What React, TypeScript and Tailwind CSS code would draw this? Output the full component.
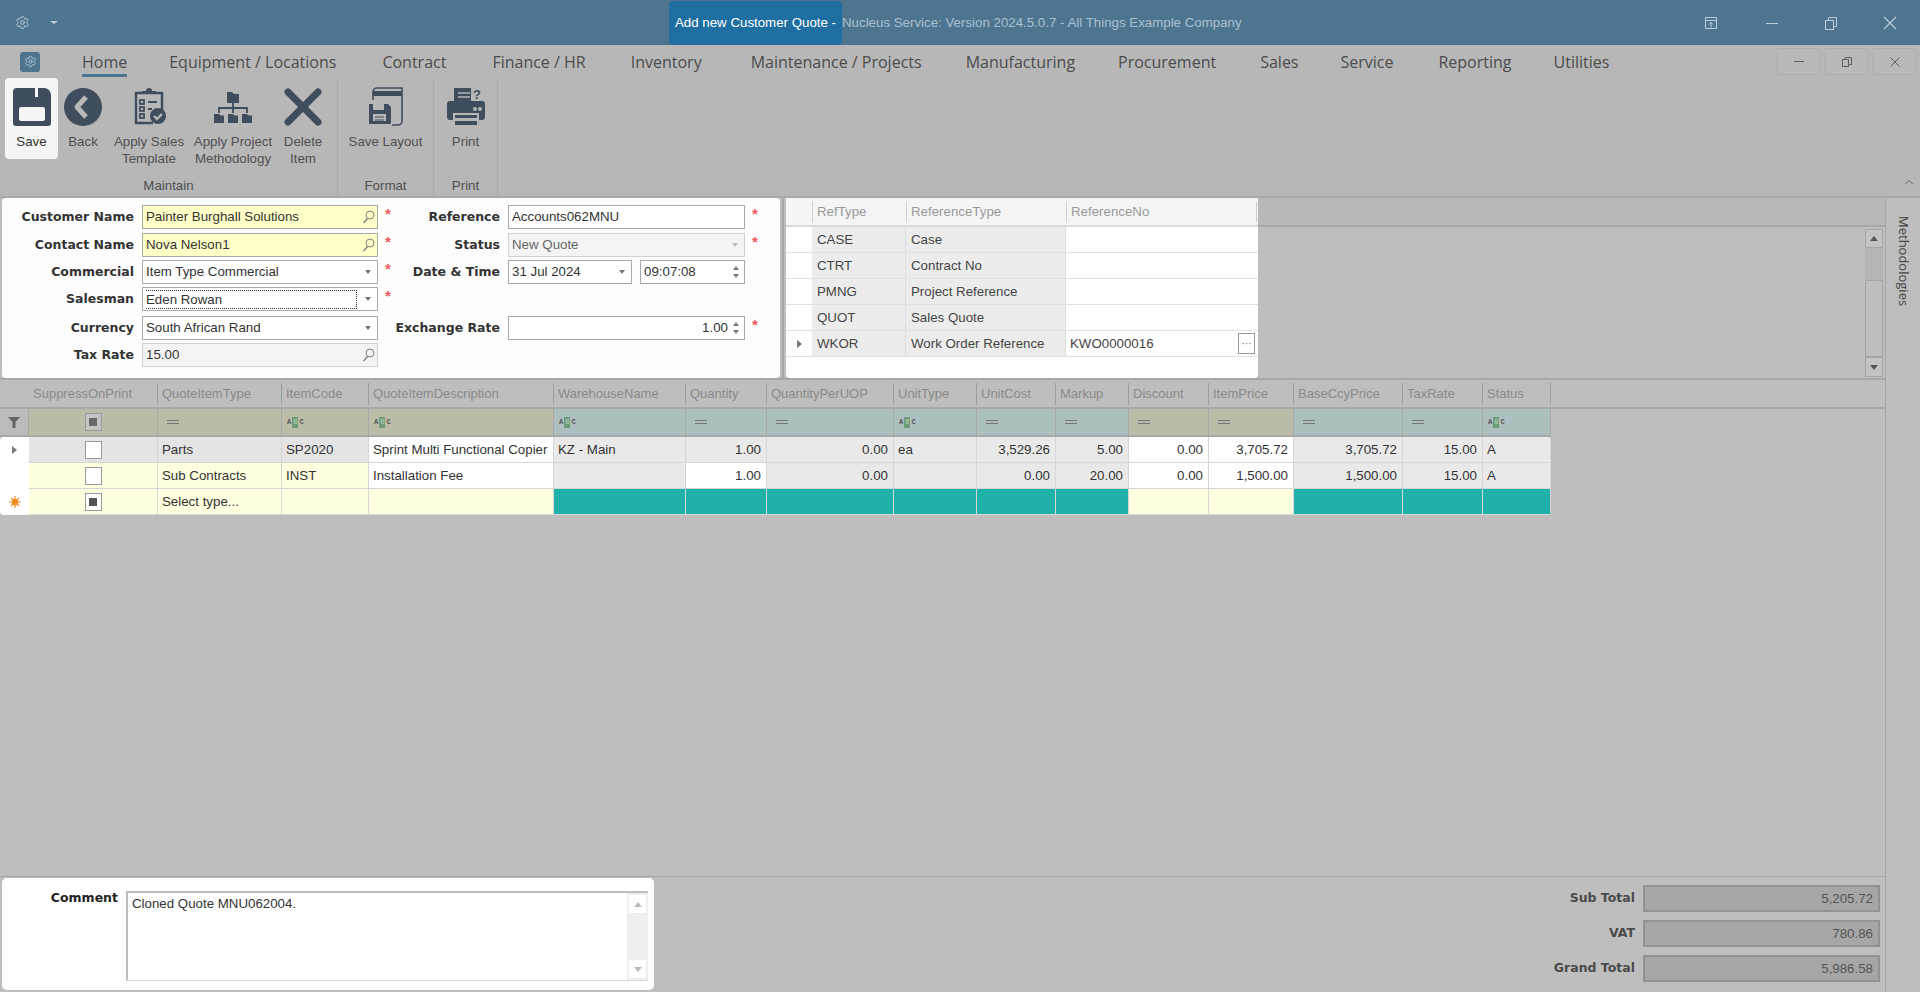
import { ReactNode } from "react"
import { ChevronUp, Settings } from "lucide-react"

const tabs = [
  { label: "Equipment / Locations", cls: "ml-[42px]" },
  { label: "Contract", cls: "ml-[46px]" },
  { label: "Finance / HR", cls: "ml-[46px]" },
  { label: "Inventory", cls: "ml-[45px]" },
  { label: "Maintenance / Projects", cls: "ml-[49px]" },
  { label: "Manufacturing", cls: "ml-[44px]" },
  { label: "Procurement", cls: "ml-[43px]" },
  { label: "Sales", cls: "ml-[44px]" },
  { label: "Service", cls: "ml-[42px]" },
  { label: "Reporting", cls: "ml-[45px]" },
  { label: "Utilities", cls: "ml-[42px]" },
]

const ink = "#3f4d5c"
const boldFont = "font-['DejaVu_Sans',sans-serif] text-[12.5px] font-bold"

function SaveIcon() {
  return (
    <svg width="40" height="40" viewBox="0 0 40 40">
      <path
        fillRule="evenodd"
        fill={ink}
        d="M5 1h18v9h3V1h6a7 7 0 0 1 7 7v28a3 3 0 0 1-3 3H4a3 3 0 0 1-3-3V5a4 4 0 0 1 4-4zM9 20a2 2 0 0 0-2 2v10a2 2 0 0 0 2 2h22a2 2 0 0 0 2-2V22a2 2 0 0 0-2-2z"
      />
    </svg>
  )
}

function BackIcon() {
  return (
    <svg width="40" height="40" viewBox="0 0 40 40">
      <circle cx="20" cy="20" r="19" fill={ink} />
      <path d="M23 10 L14 20 L23 30" fill="none" stroke="#b7b7b7" strokeWidth="5" strokeLinejoin="round" />
    </svg>
  )
}

function TemplateIcon() {
  return (
    <svg width="40" height="40" viewBox="0 0 40 40">
      <path d="M24 36H7V6h26v20" fill="none" stroke={ink} strokeWidth="2.4" />
      <path d="M13 7V4h4a3 3 0 0 1 6 0h4v3z" fill={ink} />
      <g fill="none" stroke={ink} strokeWidth="1.8">
        <rect x="11" y="13" width="4" height="4" />
        <rect x="11" y="20" width="4" height="4" />
        <rect x="11" y="27" width="4" height="4" />
      </g>
      <path d="M19 15h9M19 22h4" stroke={ink} strokeWidth="2" />
      <circle cx="29" cy="29" r="8" fill={ink} />
      <path d="M25 29l3 3 5-5" fill="none" stroke="#b7b7b7" strokeWidth="2.4" />
    </svg>
  )
}

function OrgIcon() {
  return (
    <svg width="40" height="40" viewBox="0 0 40 40">
      <path d="M14 5h5l2 2h5v9H14z" fill={ink} />
      <path d="M20 16v10M6 26v-5h28v5" fill="none" stroke={ink} strokeWidth="1.8" />
      <path d="M1 27h5l1.500 1.500H11V36H1zM15 27h5l1.500 1.500H25V36H15zM29 27h5l1.500 1.500H39V36H29z" fill={ink} />
    </svg>
  )
}

function DeleteIcon() {
  return (
    <svg width="40" height="40" viewBox="0 0 40 40">
      <path d="M5 5l30 30M35 5L5 35" stroke={ink} strokeWidth="7" strokeLinecap="round" />
    </svg>
  )
}

function LayoutIcon() {
  return (
    <svg width="36" height="40" viewBox="0 0 36 40">
      <path d="M5 13V5a4 4 0 0 1 4-4h25v33a4 4 0 0 1-4 4h-6" fill="none" stroke={ink} strokeWidth="1.6" />
      <rect x="5" y="4" width="29" height="5" fill={ink} />
      <path
        fillRule="evenodd"
        fill={ink}
        d="M1 17h4v6h11v-6h4l3 3v16a1 1 0 0 1-1 1H2a1 1 0 0 1-1-1zM5 27v7h13v-7z"
      />
      <path d="M7 30h9M7 33h9" stroke={ink} strokeWidth="1" />
    </svg>
  )
}

function PrinterIcon() {
  return (
    <svg width="40" height="40" viewBox="0 0 40 40">
      <path d="M8 1h20l4 4v9H8z" fill={ink} />
      <path d="M12 6h12M12 10h12" stroke="#b7b7b7" strokeWidth="1.5" />
      <path d="M4 14h32a3 3 0 0 1 3 3v13a3 3 0 0 1-3 3h-3v-7H7v7H4a3 3 0 0 1-3-3V17a3 3 0 0 1 3-3z" fill={ink} />
      <rect x="9" y="28" width="22" height="3" fill={ink} />
      <rect x="9" y="34" width="22" height="4" fill={ink} />
      <circle cx="29" cy="22" r="2" fill="#b7b7b7" />
      <circle cx="34" cy="22" r="2" fill="#b7b7b7" />
      <rect x="25" y="1" width="12" height="13" fill="#b7b7b7" />
      <text x="31" y="12" textAnchor="middle" fontSize="13" fontWeight="700" fontFamily="Liberation Sans, sans-serif" fill={ink}>?</text>
    </svg>
  )
}

function RibbonButton({ icon, lines, cls }: { icon: ReactNode; lines: string[]; cls: string }) {
  return (
    <div className={`flex flex-col items-center pt-[8px] ${cls}`}>
      <div className="flex h-[42px] items-center justify-center">{icon}</div>
      <div className="mt-[5px] text-center leading-[17px]">
        {lines.map((l) => (
          <div key={l}>{l}</div>
        ))}
      </div>
    </div>
  )
}

function TitleButtons() {
  return (
    <div className="flex items-center text-[#b9ccd8]">
      <svg width="16" height="16" viewBox="0 0 16 16" fill="none" stroke="currentColor" className="mr-[45px]">
        <rect x="2.500" y="2.500" width="11" height="11" />
        <path d="M2.500 5.500h11M8 12.500V7.500M6 9.500l2-2 2 2" />
      </svg>
      <svg width="16" height="16" viewBox="0 0 16 16" stroke="currentColor" className="mr-[43px]">
        <path d="M2 8.500h12" />
      </svg>
      <svg width="16" height="16" viewBox="0 0 16 16" fill="none" stroke="currentColor" className="mr-[43px]">
        <rect x="2.500" y="5.500" width="8" height="9" />
        <path d="M5.500 5V2.500h8v9H11" />
      </svg>
      <svg width="16" height="16" viewBox="0 0 16 16" stroke="currentColor" strokeWidth="1.200" className="mr-[22px]">
        <path d="M2 2l12 12M14 2L2 14" />
      </svg>
    </div>
  )
}

function MdiButton({ children }: { children: ReactNode }) {
  return (
    <div className="flex h-[27px] w-[43px] items-center justify-center rounded-[2px] border border-[#adadad] bg-[#b9b9b9] text-[#606060]">
      {children}
    </div>
  )
}

function Star() {
  return <span className="pl-[7px] text-[15px] font-bold leading-[18px] text-[#ef5a5f]">*</span>
}

function Label({ children }: { children: ReactNode }) {
  return <div className={`flex h-[24px] items-center justify-end whitespace-nowrap pr-[8px] text-[#333] ${boldFont}`}>{children}</div>
}

function Field({
  children,
  bg = "bg-white",
  right,
  cls = "",
}: {
  children?: ReactNode
  bg?: string
  right?: ReactNode
  cls?: string
}) {
  return (
    <div className={`flex h-[24px] items-center border border-[#a8a8a8] pl-[3px] text-[#333] ${bg} ${cls}`}>
      <div className="min-w-0 flex-1 truncate">{children}</div>
      {right}
    </div>
  )
}

function Lookup() {
  return (
    <svg width="13" height="14" viewBox="0 0 13 14" fill="none" stroke="#808080" className="mr-[2px]">
      <circle cx="8" cy="5" r="4" />
      <path d="M5.500 8.500L1.500 13" strokeWidth="1.400" />
    </svg>
  )
}

function Caret({ dim }: { dim?: boolean }) {
  return (
    <div className={`mr-[6px] h-0 w-0 border-x-[3.500px] border-t-[4px] border-x-transparent ${dim ? "border-t-[#bbb]" : "border-t-[#777]"}`} />
  )
}

function Spin() {
  return (
    <div className="mr-[5px] flex flex-col gap-[4px]">
      <div className="h-0 w-0 border-x-[3.500px] border-b-[4px] border-x-transparent border-b-[#777]" />
      <div className="h-0 w-0 border-x-[3.500px] border-t-[4px] border-x-transparent border-t-[#777]" />
    </div>
  )
}

function RowArrow() {
  return <div className="h-0 w-0 border-y-[4px] border-l-[5px] border-y-transparent border-l-[#777]" />
}

function QuoteForm() {
  return (
    <div className="grid h-[180px] w-[778px] shrink-0 grid-cols-[140px_236px_24px_106px_237px_1fr] grid-rows-[28px_27px_27px_29px_27px_24px] rounded-[4px] bg-[#fdfdfd] pt-[7px]">
      <Label>Customer Name</Label>
      <Field bg="bg-[#ffffc8]" right={<Lookup />}>Painter Burghall Solutions</Field>
      <Star />
      <Label>Reference</Label>
      <Field>Accounts062MNU</Field>
      <Star />

      <Label>Contact Name</Label>
      <Field bg="bg-[#ffffc8]" right={<Lookup />}>Nova Nelson1</Field>
      <Star />
      <Label>Status</Label>
      <Field bg="bg-[#f4f4f4]" right={<Caret dim />} cls="border-[#d0d0d0] text-[#666]">New Quote</Field>
      <Star />

      <Label>Commercial</Label>
      <Field right={<Caret />}>Item Type Commercial</Field>
      <Star />
      <Label>Date &amp; Time</Label>
      <div className="flex gap-[8px]">
        <Field right={<Caret />} cls="w-[124px]">31 Jul 2024</Field>
        <Field right={<Spin />} cls="w-[105px]">09:07:08</Field>
      </div>
      <div />

      <Label>Salesman</Label>
      <Field right={<Caret />}>
        <div className="-ml-[2px] mr-[8px] border border-dotted border-[#333] pl-[1px] leading-[17px]">Eden Rowan</div>
      </Field>
      <Star />
      <div />
      <div />
      <div />

      <Label>Currency</Label>
      <Field right={<Caret />}>South African Rand</Field>
      <div />
      <Label>Exchange Rate</Label>
      <Field right={<Spin />}>
        <div className="pr-[5px] text-right">1.00</div>
      </Field>
      <Star />

      <Label>Tax Rate</Label>
      <Field bg="bg-[#f4f4f4]" right={<Lookup />} cls="border-[#d0d0d0]">15.00</Field>
    </div>
  )
}

const refRows = [
  ["CASE", "Case", ""],
  ["CTRT", "Contract No", ""],
  ["PMNG", "Project Reference", ""],
  ["QUOT", "Sales Quote", ""],
  ["WKOR", "Work Order Reference", "KWO0000016"],
]

function ReferenceGrid() {
  return (
    <div className="h-[180px] w-[472px] shrink-0 rounded-[4px] bg-white">
      <div className="grid h-[29px] grid-cols-[26px_94px_160px_191px] items-center border-b-2 border-[#d9d9d9] bg-[#f5f5f5] text-[#999]">
        <div />
        <div className="border-l border-[#cfcfcf] pl-[4px] leading-[20px]">RefType</div>
        <div className="border-l border-[#cfcfcf] pl-[4px] leading-[20px]">ReferenceType</div>
        <div className="border-x border-[#cfcfcf] pl-[4px] leading-[20px]">ReferenceNo</div>
      </div>
      {refRows.map((r) => (
        <div key={r[0]} className="grid h-[26px] grid-cols-[26px_94px_160px_191px] border-b border-[#e2e2e2] text-[#444]">
          <div className="flex items-center justify-center">{r[0] === "WKOR" && <RowArrow />}</div>
          <div className="flex items-center border-r border-[#dcdcdc] bg-[#ececec] pl-[5px]">{r[0]}</div>
          <div className="flex items-center border-r border-[#dcdcdc] bg-[#ececec] pl-[5px]">{r[1]}</div>
          <div className="flex items-center justify-between pl-[4px] pr-[2px]">
            {r[2]}
            {r[2] && (
              <div className="flex h-[21px] w-[17px] items-center justify-center border border-[#999] text-[10px] leading-none text-[#555]">
                ···
              </div>
            )}
          </div>
        </div>
      ))}
    </div>
  )
}

function ScrollBar() {
  return (
    <div className="flex h-[148px] w-[18px] flex-col">
      <div className="flex h-[19px] items-center justify-center border border-[#a5a5a5] bg-[#c3c3c3]">
        <div className="h-0 w-0 border-x-[4px] border-b-[5px] border-x-transparent border-b-[#555]" />
      </div>
      <div className="h-[32px] bg-[#b5b5b5]" />
      <div className="h-[77px] border border-[#a5a5a5] bg-[#bebebe]" />
      <div className="flex h-[20px] items-center justify-center border border-[#a5a5a5] bg-[#c3c3c3]">
        <div className="h-0 w-0 border-x-[4px] border-t-[5px] border-x-transparent border-t-[#555]" />
      </div>
    </div>
  )
}

const cols = "grid-cols-[29px_129px_124px_87px_185px_132px_81px_127px_83px_79px_73px_80px_85px_109px_80px_68px]"

const headers = [
  "",
  "SuppressOnPrint",
  "QuoteItemType",
  "ItemCode",
  "QuoteItemDescription",
  "WarehouseName",
  "Quantity",
  "QuantityPerUOP",
  "UnitType",
  "UnitCost",
  "Markup",
  "Discount",
  "ItemPrice",
  "BaseCcyPrice",
  "TaxRate",
  "Status",
]

const olive = "bg-[#bcbcab]"
const slate = "bg-[#aebfbf]"

const filters: { bg: string; kind: "check" | "eq" | "abc" }[] = [
  { bg: olive, kind: "check" },
  { bg: olive, kind: "eq" },
  { bg: olive, kind: "abc" },
  { bg: olive, kind: "abc" },
  { bg: slate, kind: "abc" },
  { bg: slate, kind: "eq" },
  { bg: slate, kind: "eq" },
  { bg: slate, kind: "abc" },
  { bg: slate, kind: "eq" },
  { bg: slate, kind: "eq" },
  { bg: olive, kind: "eq" },
  { bg: olive, kind: "eq" },
  { bg: slate, kind: "eq" },
  { bg: slate, kind: "eq" },
  { bg: slate, kind: "abc" },
]

function CheckBox({ on, dark }: { on?: boolean; dark?: boolean }) {
  return (
    <div className={`flex h-[18px] w-[17px] items-center justify-center border border-[#999] ${dark ? "bg-[#c4c4c4]" : "bg-white"}`}>
      {on && <div className={`h-[8px] w-[8px] ${dark ? "bg-[#6a6a6a]" : "bg-[#555]"}`} />}
    </div>
  )
}

function FilterMark({ kind }: { kind: "check" | "eq" | "abc" }) {
  if (kind === "check") {
    return (
      <div className="flex h-full items-center justify-center">
        <CheckBox on dark />
      </div>
    )
  }
  if (kind === "eq") {
    return (
      <div className="flex h-full items-center pl-[9px]">
        <div className="h-[4px] w-[12px] border-y border-[#777]" />
      </div>
    )
  }
  return (
    <div className="flex h-full items-center pl-[5px] font-['Liberation_Mono',monospace] text-[7px] font-bold leading-[11px] text-[#555]">
      <span>A</span>
      <span className="mx-px bg-[#6f9a78] px-px text-[#9fc0a8]">B</span>
      <span>C</span>
    </div>
  )
}

const grey1 = "bg-[#e4e4e4]"
const grey2 = "bg-[#e9e9e9]"
const wht = "bg-white"
const yel = "bg-[#ffffe0]"
const teal = "bg-[#20b2aa]"

type Cell = { bg: string; text?: string; right?: boolean; check?: "off" | "on" }

const rows: { mark?: "arrow" | "star"; cells: Cell[] }[] = [
  {
    mark: "arrow",
    cells: [
      { bg: grey1, check: "off" },
      { bg: grey1, text: "Parts" },
      { bg: grey1, text: "SP2020" },
      { bg: wht, text: "Sprint Multi Functional Copier" },
      { bg: grey2, text: "KZ - Main" },
      { bg: grey2, text: "1.00", right: true },
      { bg: grey2, text: "0.00", right: true },
      { bg: grey2, text: "ea" },
      { bg: grey2, text: "3,529.26", right: true },
      { bg: grey2, text: "5.00", right: true },
      { bg: wht, text: "0.00", right: true },
      { bg: wht, text: "3,705.72", right: true },
      { bg: grey2, text: "3,705.72", right: true },
      { bg: grey2, text: "15.00", right: true },
      { bg: grey2, text: "A" },
    ],
  },
  {
    cells: [
      { bg: yel, check: "off" },
      { bg: yel, text: "Sub Contracts" },
      { bg: yel, text: "INST" },
      { bg: wht, text: "Installation Fee" },
      { bg: grey2 },
      { bg: wht, text: "1.00", right: true },
      { bg: grey2, text: "0.00", right: true },
      { bg: grey2 },
      { bg: grey2, text: "0.00", right: true },
      { bg: grey2, text: "20.00", right: true },
      { bg: wht, text: "0.00", right: true },
      { bg: wht, text: "1,500.00", right: true },
      { bg: grey2, text: "1,500.00", right: true },
      { bg: grey2, text: "15.00", right: true },
      { bg: grey2, text: "A" },
    ],
  },
  {
    mark: "star",
    cells: [
      { bg: yel, check: "on" },
      { bg: yel, text: "Select type..." },
      { bg: yel },
      { bg: yel },
      { bg: teal },
      { bg: teal },
      { bg: teal },
      { bg: teal },
      { bg: teal },
      { bg: teal },
      { bg: yel },
      { bg: yel },
      { bg: teal },
      { bg: teal },
      { bg: teal },
    ],
  },
]

function cellAlign(c: Cell) {
  if (c.check) return "justify-center"
  return c.right ? "justify-end pr-[5px]" : "pl-[4px]"
}

function ItemsGrid() {
  return (
    <div className="h-[497px] border-b border-[#a5a5a5]">
      <div className="border-b-2 border-[#a8a8a8]">
        <div className={`grid h-[27px] w-[1551px] items-center pt-px text-[13px] ${cols} text-[#8a8a8a]`}>
          {headers.map((h, i) => (
            <div key={h || i} className={`truncate pl-[4px] leading-[22px] ${i > 0 ? "border-r border-[#9e9e9e]" : ""}`}>
              {h}
            </div>
          ))}
        </div>
      </div>
      <div className={`grid h-[28px] w-[1551px] ${cols} border-b-2 border-[#a8a8a8]`}>
        <div className="flex items-center justify-center border-r border-[#a8a8a8] bg-[#bbbbbb]">
          <svg width="12" height="12" viewBox="0 0 12 12">
            <path d="M0 1h12L7.500 6v6h-3V6z" fill="#666" />
          </svg>
        </div>
        {filters.map((f, i) => (
          <div key={i} className={`border-r border-[#a8a8a8] ${f.bg}`}>
            <FilterMark kind={f.kind} />
          </div>
        ))}
      </div>
      <div className="w-[1551px] overflow-hidden rounded-[4px] bg-white">
        {rows.map((r, ri) => (
          <div key={ri} className={`grid h-[26px] ${cols}`}>
            <div className="flex items-center justify-center">
              {r.mark === "arrow" && <RowArrow />}
              {r.mark === "star" && (
                <svg width="12" height="12" viewBox="0 0 12 12">
                  <path d="M6 0v12M0 6h12M2 2l8 8M10 2l-8 8" stroke="#f08a24" strokeWidth="1.200" />
                  <circle cx="6" cy="6" r="3.200" fill="#f08a24" />
                </svg>
              )}
            </div>
            {r.cells.map((c, ci) => (
              <div
                key={ci}
                className={`flex items-center overflow-hidden whitespace-nowrap border-b border-r border-[#d6d6d6] text-[#333] ${c.bg} ${cellAlign(c)}`}
              >
                {c.check ? <CheckBox on={c.check === "on"} /> : c.text}
              </div>
            ))}
          </div>
        ))}
      </div>
    </div>
  )
}

function Total({ label, value }: { label: string; value: string }) {
  return (
    <div className="flex items-center justify-end">
      <div className={`mr-[8px] text-[#4a4a4a] ${boldFont}`}>{label}</div>
      <div className="flex h-[27px] w-[237px] items-center justify-end border-2 border-[#929292] bg-[#a6a6a6] pr-[5px] text-[#555]">
        {value}
      </div>
    </div>
  )
}

export default function App() {
  return (
    <div className="flex h-[992px] w-[1920px] flex-col overflow-hidden bg-[#bebebe] font-['Liberation_Sans',sans-serif] text-[13.3px]">
      {/* title bar */}
      <div className="flex h-[45px] shrink-0 items-center bg-[#4f7490]">
        <Settings size={15} strokeWidth={1.6} className="ml-[15px] text-[#b9ccd8]" />
        <div className="ml-[20px] h-0 w-0 border-x-[4px] border-t-[3px] border-x-transparent border-t-[#b9ccd8]" />
        <div className="ml-[611px] flex h-[44px] w-[173px] items-center justify-center rounded-[4px] bg-[#1f6fa3] text-white">
          Add new Customer Quote -
        </div>
        <div className="flex-1 text-[#a9c0d0]">Nucleus Service: Version 2024.5.0.7 - All Things Example Company</div>
        <TitleButtons />
      </div>

      {/* ribbon */}
      <div className="h-[153px] shrink-0 border-b-2 border-[#a8a8a8] bg-[#b7b7b7] text-[#505050]">
        <div className="relative flex h-[33px] items-center font-['Open_Sans',sans-serif] text-[16px] text-[#4c4c4c]">
          <div className="ml-[20px] flex h-[20px] w-[20px] items-center justify-center rounded-[3px] bg-[#4f7490]">
            <Settings size={13} strokeWidth={1.6} className="text-[#b9ccd8]" />
          </div>
          <div className="relative ml-[42px] flex h-[33px] items-center">
            Home
            <div className="absolute bottom-[1px] left-0 right-0 h-[3px] bg-[#4f7490]" />
          </div>
          {tabs.map((t) => (
            <div key={t.label} className={`whitespace-nowrap ${t.cls}`}>
              {t.label}
            </div>
          ))}
          <div className="absolute right-[4px] top-[3px] flex gap-[5px]">
            <MdiButton>
              <div className="h-px w-[10px] bg-[#606060]" />
            </MdiButton>
            <MdiButton>
              <svg width="12" height="12" viewBox="0 0 12 12" fill="none" stroke="currentColor">
                <rect x="1.500" y="3.500" width="6" height="7" />
                <path d="M4 3V1.500h6.500v7H8" />
              </svg>
            </MdiButton>
            <MdiButton>
              <svg width="12" height="12" viewBox="0 0 12 12" stroke="currentColor">
                <path d="M1.500 1.500l9 9M10.500 1.500l-9 9" />
              </svg>
            </MdiButton>
          </div>
        </div>

        <div className="relative flex h-[118px]">
          <div className="flex w-[338px] flex-col border-r border-[#a9a9a9] pl-[5px]">
            <div className="flex h-[99px]">
              <div className="h-[81px] w-[53px] rounded-[4px] bg-[#f5f5f5] text-[#333]">
                <RibbonButton icon={<SaveIcon />} lines={["Save"]} cls="w-[53px]" />
              </div>
              <RibbonButton icon={<BackIcon />} lines={["Back"]} cls="w-[50px]" />
              <RibbonButton icon={<TemplateIcon />} lines={["Apply Sales", "Template"]} cls="w-[82px]" />
              <RibbonButton icon={<OrgIcon />} lines={["Apply Project", "Methodology"]} cls="w-[86px]" />
              <RibbonButton icon={<DeleteIcon />} lines={["Delete", "Item"]} cls="w-[54px]" />
            </div>
            <div className="pr-[5px] text-center leading-[18px]">Maintain</div>
          </div>
          <div className="flex w-[96px] flex-col border-r border-[#a9a9a9]">
            <div className="h-[99px]">
              <RibbonButton icon={<LayoutIcon />} lines={["Save Layout"]} cls="w-full" />
            </div>
            <div className="text-center leading-[18px]">Format</div>
          </div>
          <div className="flex w-[64px] flex-col border-r border-[#a9a9a9]">
            <div className="h-[99px]">
              <RibbonButton icon={<PrinterIcon />} lines={["Print"]} cls="w-full" />
            </div>
            <div className="text-center leading-[18px]">Print</div>
          </div>
          <ChevronUp size={14} strokeWidth={1.6} className="absolute right-[4px] top-[97px] text-[#666]" />
        </div>
      </div>

      {/* body */}
      <div className="flex min-h-0 flex-1">
        <div className="flex w-[1886px] shrink-0 flex-col border-r border-[#a8a8a8]">
          <div className="flex h-[182px] shrink-0 border-b-2 border-[#a8a8a8] pl-[2px]">
            <QuoteForm />
            <div className="ml-[2px] w-[2px] bg-[#a8a8a8]" />
            <div className="ml-[2px]">
              <ReferenceGrid />
            </div>
            <div className="flex flex-1 flex-col">
              <div className="h-[29px] border-b-2 border-[#a8a8a8] bg-[#b9b9b9]" />
              <div className="flex justify-end pr-[2px] pt-[2px]">
                <ScrollBar />
              </div>
            </div>
          </div>
          <ItemsGrid />
          <div className="flex flex-1 justify-between">
            <div className="ml-[2px] mt-px flex h-[112px] w-[652px] rounded-[5px] bg-white pr-[6px] pt-[13px]">
              <div className={`w-[124px] pr-[8px] text-right leading-[14px] text-[#222] ${boldFont}`}>Comment</div>
              <div className="flex h-[90px] flex-1 border-b border-l-2 border-t-2 border-b-[#dddddd] border-l-[#bdbdbd] border-t-[#bdbdbd] pl-[4px]">
                <div className="flex-1 pt-px text-[#333]">Cloned Quote MNU062004.</div>
                <div className="flex w-[21px] flex-col justify-between bg-[#eeeeee] px-[2px] py-[2px]">
                  <div className="flex h-[18px] items-center justify-center bg-white">
                    <div className="h-0 w-0 border-x-[4px] border-b-[5px] border-x-transparent border-b-[#bbb]" />
                  </div>
                  <div className="flex h-[18px] items-center justify-center bg-white">
                    <div className="h-0 w-0 border-x-[4px] border-t-[5px] border-x-transparent border-t-[#bbb]" />
                  </div>
                </div>
              </div>
            </div>
            <div className="flex flex-col gap-[8px] pr-[5px] pt-[8px]">
              <Total label="Sub Total" value="5,205.72" />
              <Total label="VAT" value="780.86" />
              <Total label="Grand Total" value="5,986.58" />
            </div>
          </div>
        </div>
        <div className="flex-1 pl-[7px] pt-[18px] font-['Open_Sans',sans-serif] text-[13px] text-[#444]">
          <div className="[writing-mode:vertical-rl]">Methodologies</div>
        </div>
      </div>
    </div>
  )
}
